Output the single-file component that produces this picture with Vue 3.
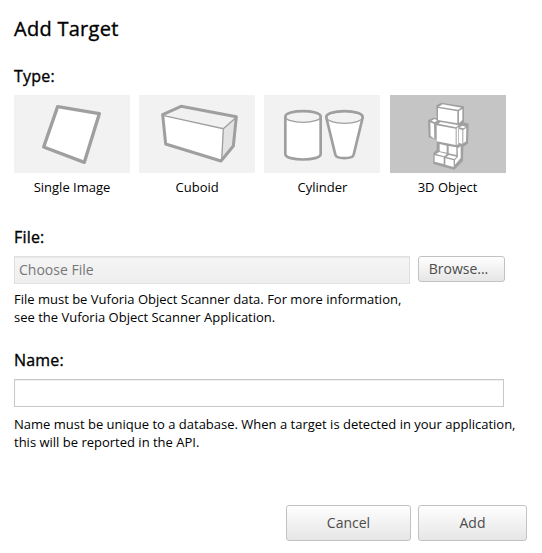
<script setup>
import { ref } from 'vue'

const types = [
  { id: 'image', label: 'Single Image' },
  { id: 'cuboid', label: 'Cuboid' },
  { id: 'cylinder', label: 'Cylinder' },
  { id: 'object', label: '3D Object' },
]
const selected = ref('object')
const name = ref('')
</script>

<template>
  <main class="dialog">
    <h1>Add Target</h1>

    <h2 class="type-title">Type:</h2>
    <div class="types">
      <div
        v-for="t in types"
        :key="t.id"
        class="type"
        :class="{ selected: selected === t.id }"
        @click="selected = t.id"
      >
        <div class="tile">
          <svg v-if="t.id === 'image'" viewBox="12 15 348 234">
            <path d="M143 50 268 71 223 217 101 171Z" fill="#fff" stroke="#9f9f9f" stroke-width="10" stroke-linejoin="round" />
          </svg>
          <svg v-else-if="t.id === 'cuboid'" viewBox="12 15 348 234">
            <path d="M83 74 138 49 304 80 295 168 258 213 92 162Z" fill="#fff" />
            <path d="M83 74 138 49 304 80 265 116Z" fill="#f1f1f1" />
            <path d="M265 116 304 80 295 168 258 213Z" fill="#e3e3e3" />
            <path d="M83 76 265 116 304 82M265 116 260 212" fill="none" stroke="#9f9f9f" stroke-width="4" />
            <path d="M83 74 138 49 304 80 295 168 258 213 92 162Z" fill="none" stroke="#9f9f9f" stroke-width="9" stroke-linejoin="round" />
          </svg>
          <svg v-else-if="t.id === 'cylinder'" viewBox="12 15 348 234">
            <path d="M76 80V192C76 214 182 214 182 192V80Z" fill="#fff" />
            <ellipse cx="129" cy="80" rx="53" ry="17" fill="#f2f2f2" stroke="#9f9f9f" stroke-width="4" />
            <path d="M76 80C76 58 182 58 182 80V192C182 214 76 214 76 192Z" fill="none" stroke="#9f9f9f" stroke-width="8" />
            <path d="M199 82 226 194C228 208 279 208 281 194L308 82Z" fill="#fff" />
            <ellipse cx="253.500" cy="82" rx="54" ry="18" fill="#f2f2f2" stroke="#9f9f9f" stroke-width="4" />
            <path d="M199 83C193 57 314 57 308 83L281 194C279 208 228 208 226 194Z" fill="none" stroke="#9f9f9f" stroke-width="8" />
          </svg>
          <svg v-else viewBox="-102 -15 348 234">
            <path d="M37 16 52 8 120 19V67L134 71 132 131 118 140 117 183 91 209 28 192V160L38 149V120L14 112 12 61 28 53 38 55Z" fill="#a0a0a0" />
            <g fill="#fff">
              <path d="M44 20 56 13 112 23 102 29ZM42 24 100 34V70L42 60ZM105 33 115 27V60L105 69Z" />
              <path d="M43 71 50 66 104 76 96 82ZM38 76 95 86V135L38 124ZM98 85 103 81V133L98 135Z" />
              <path d="M19 67 30 72 31 116 20 108ZM22 62 32 57 39 61 33 67Z" />
              <path d="M105 87 115 90V132L105 128ZM106 82 116 77 126 81 117 85ZM118 89 127 84 126 124 118 130Z" />
              <path d="M47 132 68 137V158L47 154ZM74 138 97 142V165L74 160ZM101 145 110 139V174L93 194V180L102 170Z" />
              <path d="M32 166 59 172V192L32 185ZM36 162 46 156 69 162 61 169Z" />
              <path d="M64 175 89 181V201L64 194ZM67 171 75 165 98 170 91 177Z" />
            </g>
          </svg>
        </div>
        <span class="type-label">{{ t.label }}</span>
      </div>
    </div>

    <h2 class="file-title">File:</h2>
    <div class="file-row">
      <div class="file-path">Choose File</div>
      <button type="button" class="browse">Browse...</button>
    </div>
    <p class="hint">File must be Vuforia Object Scanner data. For more information,<br />see the Vuforia Object Scanner Application.</p>

    <h2 class="name-title">Name:</h2>
    <input v-model="name" class="name-input" type="text" />
    <p class="hint">Name must be unique to a database. When a target is detected in your application,<br />this will be reported in the API.</p>

    <footer class="actions">
      <button type="button" class="cancel">Cancel</button>
      <button type="button" class="add">Add</button>
    </footer>
  </main>
</template>

<style>
body {
  margin: 0;
  background: #fff;
}
</style>

<style scoped>
.dialog {
  box-sizing: border-box;
  width: 542px;
  height: 553px;
  padding: 15px 15px 12px 14px;
  display: flex;
  flex-direction: column;
  overflow: hidden;
  background: #fff;
  color: #000;
  font-family: "Open Sans", sans-serif;
  font-size: 13px;
  white-space: nowrap;
}
h1,
h2,
p {
  margin: 0;
}
h1 {
  font-size: 20px;
  line-height: 28px;
  font-weight: 400;
  letter-spacing: 0.28px;
  -webkit-text-stroke: 0.35px #000;
}
h2 {
  font-size: 16px;
  line-height: 24px;
  font-weight: 400;
  letter-spacing: 0.2px;
  -webkit-text-stroke: 0.35px #000;
}
.type-title {
  margin-top: 21px;
}
.types {
  display: flex;
  gap: 9.2px;
  margin-top: 7px;
}
.type {
  width: 116px;
  cursor: pointer;
}
.tile {
  height: 78px;
  background: #f2f2f2;
}
.selected .tile {
  background: #c5c5c5;
}
.tile svg {
  display: block;
  width: 116px;
  height: 78px;
}
.type-label {
  display: block;
  margin-top: 5px;
  line-height: 18px;
  text-align: center;
}
.file-title {
  margin-top: 29px;
}
.file-row {
  display: flex;
  align-items: flex-start;
  gap: 8px;
  margin-top: 7px;
}
.file-path {
  box-sizing: border-box;
  width: 396px;
  height: 28px;
  padding-left: 4px;
  border: 1px solid #e0e0e0;
  box-shadow: inset 0 1px 0 #e6e6e6;
  background: linear-gradient(#f5f5f5, #eeeeee);
  color: #777;
  font-size: 14px;
  line-height: 26px;
}
button {
  box-sizing: border-box;
  padding: 0;
  border: 1px solid #c2c2c2;
  border-radius: 3px;
  background: linear-gradient(#fefefe, #e6e6e6);
  color: #4c4c4c;
  font-family: inherit;
  font-size: 14px;
}
.browse {
  width: 87px;
  height: 26px;
  padding-right: 6px;
  line-height: 24px;
}
.hint {
  margin-top: 6px;
  line-height: 18px;
}
.name-title {
  margin-top: 22px;
}
.name-input {
  box-sizing: border-box;
  width: 490px;
  height: 28px;
  margin-top: 7px;
  padding: 0 4px;
  border: 1px solid #c8c8c8;
  box-shadow: inset 0 1px 1px #eee;
  outline: none;
  font: inherit;
}
.name-input + .hint {
  margin-top: 8px;
}
.actions {
  display: flex;
  justify-content: flex-end;
  gap: 7px;
  margin-top: auto;
}
.cancel,
.add {
  height: 36px;
  line-height: 34px;
}
.cancel {
  width: 125px;
}
.add {
  width: 109px;
}
</style>
